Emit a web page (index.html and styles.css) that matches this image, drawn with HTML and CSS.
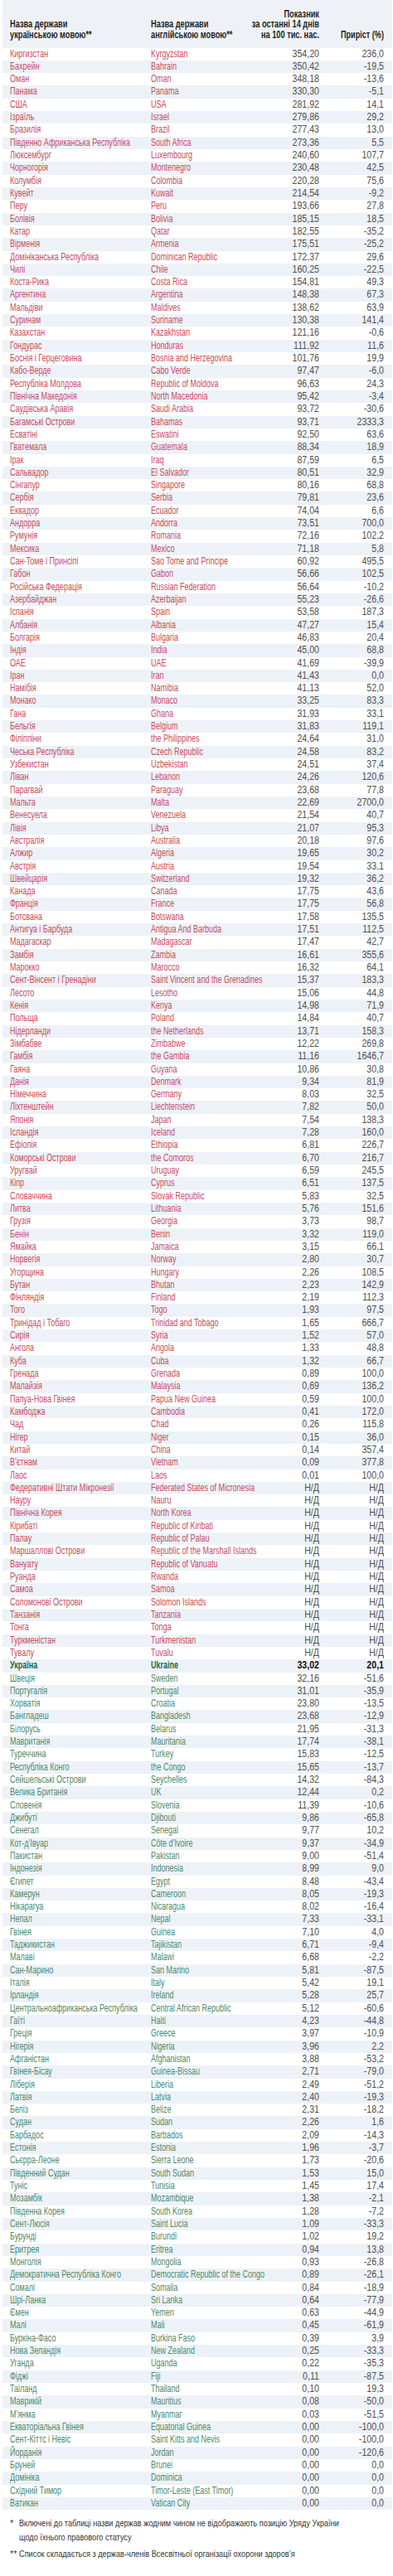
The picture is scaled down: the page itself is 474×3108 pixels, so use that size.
FILE: index.html
```html
<!DOCTYPE html>
<html lang="uk">
<head>
<meta charset="utf-8">
<title>Показник захворюваності за 14 днів</title>
<link rel="stylesheet" href="styles.css">
</head>
<body>
<div class="page">
  <div class="tbl">
    <div class="head">
      <div class="c1">Назва держави<br>українською мовою**</div>
      <div class="c2">Назва держави<br>англійською мовою**</div>
      <div class="c3">Показник<br>за останні 14 днів<br>на 100 тис. нас.</div>
      <div class="c4">Приріст (%)</div>
    </div>
    <div class="rows">
      <div class="r red"><span class="c1">Киргизстан</span><span class="c2">Kyrgyzstan</span><span class="c3">354,20</span><span class="c4">236,0</span></div>
      <div class="r red"><span class="c1">Бахрейн</span><span class="c2">Bahrain</span><span class="c3">350,42</span><span class="c4">-19,5</span></div>
      <div class="r red"><span class="c1">Оман</span><span class="c2">Oman</span><span class="c3">348,18</span><span class="c4">-13,6</span></div>
      <div class="r red"><span class="c1">Панама</span><span class="c2">Panama</span><span class="c3">330,30</span><span class="c4">-5,1</span></div>
      <div class="r red"><span class="c1">США</span><span class="c2">USA</span><span class="c3">281,92</span><span class="c4">14,1</span></div>
      <div class="r red"><span class="c1">Ізраїль</span><span class="c2">Israel</span><span class="c3">279,86</span><span class="c4">29,2</span></div>
      <div class="r red"><span class="c1">Бразилія</span><span class="c2">Brazil</span><span class="c3">277,43</span><span class="c4">13,0</span></div>
      <div class="r red"><span class="c1">Південно Африканська Республіка</span><span class="c2">South Africa</span><span class="c3">273,36</span><span class="c4">5,5</span></div>
      <div class="r red"><span class="c1">Люксембург</span><span class="c2">Luxembourg</span><span class="c3">240,60</span><span class="c4">107,7</span></div>
      <div class="r red"><span class="c1">Чорногорія</span><span class="c2">Montenegro</span><span class="c3">230,48</span><span class="c4">42,5</span></div>
      <div class="r red"><span class="c1">Колумбія</span><span class="c2">Colombia</span><span class="c3">220,28</span><span class="c4">75,6</span></div>
      <div class="r red"><span class="c1">Кувейт</span><span class="c2">Kuwait</span><span class="c3">214,54</span><span class="c4">-9,2</span></div>
      <div class="r red"><span class="c1">Перу</span><span class="c2">Peru</span><span class="c3">193,66</span><span class="c4">27,8</span></div>
      <div class="r red"><span class="c1">Болівія</span><span class="c2">Bolivia</span><span class="c3">185,15</span><span class="c4">18,5</span></div>
      <div class="r red"><span class="c1">Катар</span><span class="c2">Qatar</span><span class="c3">182,55</span><span class="c4">-35,2</span></div>
      <div class="r red"><span class="c1">Вірменія</span><span class="c2">Armenia</span><span class="c3">175,51</span><span class="c4">-25,2</span></div>
      <div class="r red"><span class="c1">Домініканська Республіка</span><span class="c2">Dominican Republic</span><span class="c3">172,37</span><span class="c4">29,6</span></div>
      <div class="r red"><span class="c1">Чилі</span><span class="c2">Chile</span><span class="c3">160,25</span><span class="c4">-22,5</span></div>
      <div class="r red"><span class="c1">Коста-Рика</span><span class="c2">Costa Rica</span><span class="c3">154,81</span><span class="c4">49,3</span></div>
      <div class="r red"><span class="c1">Аргентина</span><span class="c2">Argentina</span><span class="c3">148,38</span><span class="c4">67,3</span></div>
      <div class="r red"><span class="c1">Мальдіви</span><span class="c2">Maldives</span><span class="c3">138,62</span><span class="c4">63,9</span></div>
      <div class="r red"><span class="c1">Суринам</span><span class="c2">Suriname</span><span class="c3">130,38</span><span class="c4">141,4</span></div>
      <div class="r red"><span class="c1">Казахстан</span><span class="c2">Kazakhstan</span><span class="c3">121,16</span><span class="c4">-0,6</span></div>
      <div class="r red"><span class="c1">Гондурас</span><span class="c2">Honduras</span><span class="c3">111,92</span><span class="c4">11,6</span></div>
      <div class="r red"><span class="c1">Боснія і Герцеговина</span><span class="c2">Bosnia and Herzegovina</span><span class="c3">101,76</span><span class="c4">19,9</span></div>
      <div class="r red"><span class="c1">Кабо-Верде</span><span class="c2">Cabo Verde</span><span class="c3">97,47</span><span class="c4">-6,0</span></div>
      <div class="r red"><span class="c1">Республіка Молдова</span><span class="c2">Republic of Moldova</span><span class="c3">96,63</span><span class="c4">24,3</span></div>
      <div class="r red"><span class="c1">Північна Македонія</span><span class="c2">North Macedonia</span><span class="c3">95,42</span><span class="c4">-3,4</span></div>
      <div class="r red"><span class="c1">Саудівська Аравія</span><span class="c2">Saudi Arabia</span><span class="c3">93,72</span><span class="c4">-30,6</span></div>
      <div class="r red"><span class="c1">Багамські Острови</span><span class="c2">Bahamas</span><span class="c3">93,71</span><span class="c4">2333,3</span></div>
      <div class="r red"><span class="c1">Есватіні</span><span class="c2">Eswatini</span><span class="c3">92,50</span><span class="c4">63,6</span></div>
      <div class="r red"><span class="c1">Гватемала</span><span class="c2">Guatemala</span><span class="c3">88,34</span><span class="c4">18,9</span></div>
      <div class="r red"><span class="c1">Ірак</span><span class="c2">Iraq</span><span class="c3">87,59</span><span class="c4">6,5</span></div>
      <div class="r red"><span class="c1">Сальвадор</span><span class="c2">El Salvador</span><span class="c3">80,51</span><span class="c4">32,9</span></div>
      <div class="r red"><span class="c1">Сінгапур</span><span class="c2">Singapore</span><span class="c3">80,16</span><span class="c4">68,8</span></div>
      <div class="r red"><span class="c1">Сербія</span><span class="c2">Serbia</span><span class="c3">79,81</span><span class="c4">23,6</span></div>
      <div class="r red"><span class="c1">Еквадор</span><span class="c2">Ecuador</span><span class="c3">74,04</span><span class="c4">6,6</span></div>
      <div class="r red"><span class="c1">Андорра</span><span class="c2">Andorra</span><span class="c3">73,51</span><span class="c4">700,0</span></div>
      <div class="r red"><span class="c1">Румунія</span><span class="c2">Romania</span><span class="c3">72,16</span><span class="c4">102,2</span></div>
      <div class="r red"><span class="c1">Мексика</span><span class="c2">Mexico</span><span class="c3">71,18</span><span class="c4">5,8</span></div>
      <div class="r red"><span class="c1">Сан-Томе і Принсіпі</span><span class="c2">Sao Tome and Principe</span><span class="c3">60,92</span><span class="c4">495,5</span></div>
      <div class="r red"><span class="c1">Габон</span><span class="c2">Gabon</span><span class="c3">56,66</span><span class="c4">102,5</span></div>
      <div class="r red"><span class="c1">Російська Федерація</span><span class="c2">Russian Federation</span><span class="c3">56,64</span><span class="c4">-10,2</span></div>
      <div class="r red"><span class="c1">Азербайджан</span><span class="c2">Azerbaijan</span><span class="c3">55,23</span><span class="c4">-26,6</span></div>
      <div class="r red"><span class="c1">Іспанія</span><span class="c2">Spain</span><span class="c3">53,58</span><span class="c4">187,3</span></div>
      <div class="r red"><span class="c1">Албанія</span><span class="c2">Albania</span><span class="c3">47,27</span><span class="c4">15,4</span></div>
      <div class="r red"><span class="c1">Болгарія</span><span class="c2">Bulgaria</span><span class="c3">46,83</span><span class="c4">20,4</span></div>
      <div class="r red"><span class="c1">Індія</span><span class="c2">India</span><span class="c3">45,00</span><span class="c4">68,8</span></div>
      <div class="r red"><span class="c1">ОАЕ</span><span class="c2">UAE</span><span class="c3">41,69</span><span class="c4">-39,9</span></div>
      <div class="r red"><span class="c1">Іран</span><span class="c2">Iran</span><span class="c3">41,43</span><span class="c4">0,0</span></div>
      <div class="r red"><span class="c1">Намібія</span><span class="c2">Namibia</span><span class="c3">41,13</span><span class="c4">52,0</span></div>
      <div class="r red"><span class="c1">Монако</span><span class="c2">Monaco</span><span class="c3">33,25</span><span class="c4">83,3</span></div>
      <div class="r red"><span class="c1">Гана</span><span class="c2">Ghana</span><span class="c3">31,93</span><span class="c4">33,1</span></div>
      <div class="r red"><span class="c1">Бельгія</span><span class="c2">Belgium</span><span class="c3">31,83</span><span class="c4">119,1</span></div>
      <div class="r red"><span class="c1">Філіппіни</span><span class="c2">the Philippines</span><span class="c3">24,64</span><span class="c4">31,0</span></div>
      <div class="r red"><span class="c1">Чеська Республіка</span><span class="c2">Czech Republic</span><span class="c3">24,58</span><span class="c4">83,2</span></div>
      <div class="r red"><span class="c1">Узбекистан</span><span class="c2">Uzbekistan</span><span class="c3">24,51</span><span class="c4">37,4</span></div>
      <div class="r red"><span class="c1">Ліван</span><span class="c2">Lebanon</span><span class="c3">24,26</span><span class="c4">120,6</span></div>
      <div class="r red"><span class="c1">Парагвай</span><span class="c2">Paraguay</span><span class="c3">23,68</span><span class="c4">77,8</span></div>
      <div class="r red"><span class="c1">Мальта</span><span class="c2">Malta</span><span class="c3">22,69</span><span class="c4">2700,0</span></div>
      <div class="r red"><span class="c1">Венесуела</span><span class="c2">Venezuela</span><span class="c3">21,54</span><span class="c4">40,7</span></div>
      <div class="r red"><span class="c1">Лівія</span><span class="c2">Libya</span><span class="c3">21,07</span><span class="c4">95,3</span></div>
      <div class="r red"><span class="c1">Австралія</span><span class="c2">Australia</span><span class="c3">20,18</span><span class="c4">97,6</span></div>
      <div class="r red"><span class="c1">Алжир</span><span class="c2">Algeria</span><span class="c3">19,65</span><span class="c4">30,2</span></div>
      <div class="r red"><span class="c1">Австрія</span><span class="c2">Austria</span><span class="c3">19,54</span><span class="c4">33,1</span></div>
      <div class="r red"><span class="c1">Швейцарія</span><span class="c2">Switzerland</span><span class="c3">19,32</span><span class="c4">36,2</span></div>
      <div class="r red"><span class="c1">Канада</span><span class="c2">Canada</span><span class="c3">17,75</span><span class="c4">43,6</span></div>
      <div class="r red"><span class="c1">Франція</span><span class="c2">France</span><span class="c3">17,75</span><span class="c4">56,8</span></div>
      <div class="r red"><span class="c1">Ботсвана</span><span class="c2">Botswana</span><span class="c3">17,58</span><span class="c4">135,5</span></div>
      <div class="r red"><span class="c1">Антигуа і Барбуда</span><span class="c2">Antigua And Barbuda</span><span class="c3">17,51</span><span class="c4">112,5</span></div>
      <div class="r red"><span class="c1">Мадагаскар</span><span class="c2">Madagascar</span><span class="c3">17,47</span><span class="c4">42,7</span></div>
      <div class="r red"><span class="c1">Замбія</span><span class="c2">Zambia</span><span class="c3">16,61</span><span class="c4">355,6</span></div>
      <div class="r red"><span class="c1">Марокко</span><span class="c2">Marocco</span><span class="c3">16,32</span><span class="c4">64,1</span></div>
      <div class="r red"><span class="c1">Сент-Вінсент і Гренадіни</span><span class="c2">Saint Vincent and the Grenadines</span><span class="c3">15,37</span><span class="c4">183,3</span></div>
      <div class="r red"><span class="c1">Лесото</span><span class="c2">Lesotho</span><span class="c3">15,06</span><span class="c4">44,8</span></div>
      <div class="r red"><span class="c1">Кенія</span><span class="c2">Kenya</span><span class="c3">14,98</span><span class="c4">71,9</span></div>
      <div class="r red"><span class="c1">Польща</span><span class="c2">Poland</span><span class="c3">14,84</span><span class="c4">40,7</span></div>
      <div class="r red"><span class="c1">Нідерланди</span><span class="c2">the Netherlands</span><span class="c3">13,71</span><span class="c4">158,3</span></div>
      <div class="r red"><span class="c1">Зімбабве</span><span class="c2">Zimbabwe</span><span class="c3">12,22</span><span class="c4">269,8</span></div>
      <div class="r red"><span class="c1">Гамбія</span><span class="c2">the Gambia</span><span class="c3">11,16</span><span class="c4">1646,7</span></div>
      <div class="r red"><span class="c1">Гаяна</span><span class="c2">Guyana</span><span class="c3">10,86</span><span class="c4">30,8</span></div>
      <div class="r red"><span class="c1">Данія</span><span class="c2">Denmark</span><span class="c3">9,34</span><span class="c4">81,9</span></div>
      <div class="r red"><span class="c1">Німеччина</span><span class="c2">Germany</span><span class="c3">8,03</span><span class="c4">32,5</span></div>
      <div class="r red"><span class="c1">Ліхтенштейн</span><span class="c2">Liechtenstein</span><span class="c3">7,82</span><span class="c4">50,0</span></div>
      <div class="r red"><span class="c1">Японія</span><span class="c2">Japan</span><span class="c3">7,54</span><span class="c4">138,3</span></div>
      <div class="r red"><span class="c1">Ісландія</span><span class="c2">Iceland</span><span class="c3">7,28</span><span class="c4">160,0</span></div>
      <div class="r red"><span class="c1">Ефіопія</span><span class="c2">Ethiopia</span><span class="c3">6,81</span><span class="c4">226,7</span></div>
      <div class="r red"><span class="c1">Коморські Острови</span><span class="c2">the Comoros</span><span class="c3">6,70</span><span class="c4">216,7</span></div>
      <div class="r red"><span class="c1">Уругвай</span><span class="c2">Uruguay</span><span class="c3">6,59</span><span class="c4">245,5</span></div>
      <div class="r red"><span class="c1">Кіпр</span><span class="c2">Cyprus</span><span class="c3">6,51</span><span class="c4">137,5</span></div>
      <div class="r red"><span class="c1">Словаччина</span><span class="c2">Slovak Republic</span><span class="c3">5,83</span><span class="c4">32,5</span></div>
      <div class="r red"><span class="c1">Литва</span><span class="c2">Lithuania</span><span class="c3">5,76</span><span class="c4">151,6</span></div>
      <div class="r red"><span class="c1">Грузія</span><span class="c2">Georgia</span><span class="c3">3,73</span><span class="c4">98,7</span></div>
      <div class="r red"><span class="c1">Бенін</span><span class="c2">Benin</span><span class="c3">3,32</span><span class="c4">119,0</span></div>
      <div class="r red"><span class="c1">Ямайка</span><span class="c2">Jamaica</span><span class="c3">3,15</span><span class="c4">66,1</span></div>
      <div class="r red"><span class="c1">Норвегія</span><span class="c2">Norway</span><span class="c3">2,80</span><span class="c4">30,7</span></div>
      <div class="r red"><span class="c1">Угорщина</span><span class="c2">Hungary</span><span class="c3">2,26</span><span class="c4">108,5</span></div>
      <div class="r red"><span class="c1">Бутан</span><span class="c2">Bhutan</span><span class="c3">2,23</span><span class="c4">142,9</span></div>
      <div class="r red"><span class="c1">Фінляндія</span><span class="c2">Finland</span><span class="c3">2,19</span><span class="c4">112,3</span></div>
      <div class="r red"><span class="c1">Того</span><span class="c2">Togo</span><span class="c3">1,93</span><span class="c4">97,5</span></div>
      <div class="r red"><span class="c1">Тринідад і Тобаго</span><span class="c2">Trinidad and Tobago</span><span class="c3">1,65</span><span class="c4">666,7</span></div>
      <div class="r red"><span class="c1">Сирія</span><span class="c2">Syria</span><span class="c3">1,52</span><span class="c4">57,0</span></div>
      <div class="r red"><span class="c1">Ангола</span><span class="c2">Angola</span><span class="c3">1,33</span><span class="c4">48,8</span></div>
      <div class="r red"><span class="c1">Куба</span><span class="c2">Cuba</span><span class="c3">1,32</span><span class="c4">66,7</span></div>
      <div class="r red"><span class="c1">Гренада</span><span class="c2">Grenada</span><span class="c3">0,89</span><span class="c4">100,0</span></div>
      <div class="r red"><span class="c1">Малайзія</span><span class="c2">Malaysia</span><span class="c3">0,69</span><span class="c4">136,2</span></div>
      <div class="r red"><span class="c1">Папуа-Нова Гвінея</span><span class="c2">Papua New Guinea</span><span class="c3">0,59</span><span class="c4">100,0</span></div>
      <div class="r red"><span class="c1">Камбоджа</span><span class="c2">Cambodia</span><span class="c3">0,41</span><span class="c4">172,0</span></div>
      <div class="r red"><span class="c1">Чад</span><span class="c2">Chad</span><span class="c3">0,26</span><span class="c4">115,8</span></div>
      <div class="r red"><span class="c1">Нігер</span><span class="c2">Niger</span><span class="c3">0,15</span><span class="c4">36,0</span></div>
      <div class="r red"><span class="c1">Китай</span><span class="c2">China</span><span class="c3">0,14</span><span class="c4">357,4</span></div>
      <div class="r red"><span class="c1">В’єтнам</span><span class="c2">Vietnam</span><span class="c3">0,09</span><span class="c4">377,8</span></div>
      <div class="r red"><span class="c1">Лаос</span><span class="c2">Laos</span><span class="c3">0,01</span><span class="c4">100,0</span></div>
      <div class="r red"><span class="c1">Федеративні Штати Мікронезії</span><span class="c2">Federated States of Micronesia</span><span class="c3">Н/Д</span><span class="c4">Н/Д</span></div>
      <div class="r red"><span class="c1">Науру</span><span class="c2">Nauru</span><span class="c3">Н/Д</span><span class="c4">Н/Д</span></div>
      <div class="r red"><span class="c1">Північна Корея</span><span class="c2">North Korea</span><span class="c3">Н/Д</span><span class="c4">Н/Д</span></div>
      <div class="r red"><span class="c1">Кірибаті</span><span class="c2">Republic of Kiribati</span><span class="c3">Н/Д</span><span class="c4">Н/Д</span></div>
      <div class="r red"><span class="c1">Палау</span><span class="c2">Republic of Palau</span><span class="c3">Н/Д</span><span class="c4">Н/Д</span></div>
      <div class="r red"><span class="c1">Маршаллові Острови</span><span class="c2">Republic of the Marshall Islands</span><span class="c3">Н/Д</span><span class="c4">Н/Д</span></div>
      <div class="r red"><span class="c1">Вануату</span><span class="c2">Republic of Vanuatu</span><span class="c3">Н/Д</span><span class="c4">Н/Д</span></div>
      <div class="r red"><span class="c1">Руанда</span><span class="c2">Rwanda</span><span class="c3">Н/Д</span><span class="c4">Н/Д</span></div>
      <div class="r red"><span class="c1">Самоа</span><span class="c2">Samoa</span><span class="c3">Н/Д</span><span class="c4">Н/Д</span></div>
      <div class="r red"><span class="c1">Соломонові Острови</span><span class="c2">Solomon Islands</span><span class="c3">Н/Д</span><span class="c4">Н/Д</span></div>
      <div class="r red"><span class="c1">Танзанія</span><span class="c2">Tanzania</span><span class="c3">Н/Д</span><span class="c4">Н/Д</span></div>
      <div class="r red"><span class="c1">Тонга</span><span class="c2">Tonga</span><span class="c3">Н/Д</span><span class="c4">Н/Д</span></div>
      <div class="r red"><span class="c1">Туркменістан</span><span class="c2">Turkmenistan</span><span class="c3">Н/Д</span><span class="c4">Н/Д</span></div>
      <div class="r red"><span class="c1">Тувалу</span><span class="c2">Tuvalu</span><span class="c3">Н/Д</span><span class="c4">Н/Д</span></div>
      <div class="r ua"><span class="c1">Україна</span><span class="c2">Ukraine</span><span class="c3">33,02</span><span class="c4">20,1</span></div>
      <div class="r green"><span class="c1">Швеція</span><span class="c2">Sweden</span><span class="c3">32,16</span><span class="c4">-51,6</span></div>
      <div class="r green"><span class="c1">Португалія</span><span class="c2">Portugal</span><span class="c3">31,01</span><span class="c4">-35,9</span></div>
      <div class="r green"><span class="c1">Хорватія</span><span class="c2">Croatia</span><span class="c3">23,80</span><span class="c4">-13,5</span></div>
      <div class="r green"><span class="c1">Бангладеш</span><span class="c2">Bangladesh</span><span class="c3">23,68</span><span class="c4">-12,9</span></div>
      <div class="r green"><span class="c1">Білорусь</span><span class="c2">Belarus</span><span class="c3">21,95</span><span class="c4">-31,3</span></div>
      <div class="r green"><span class="c1">Мавританія</span><span class="c2">Mauritania</span><span class="c3">17,74</span><span class="c4">-38,1</span></div>
      <div class="r green"><span class="c1">Туреччина</span><span class="c2">Turkey</span><span class="c3">15,83</span><span class="c4">-12,5</span></div>
      <div class="r green"><span class="c1">Республіка Конго</span><span class="c2">the Congo</span><span class="c3">15,65</span><span class="c4">-13,7</span></div>
      <div class="r green"><span class="c1">Сейшельські Острови</span><span class="c2">Seychelles</span><span class="c3">14,32</span><span class="c4">-84,3</span></div>
      <div class="r green"><span class="c1">Велика Британія</span><span class="c2">UK</span><span class="c3">12,44</span><span class="c4">0,2</span></div>
      <div class="r green"><span class="c1">Словенія</span><span class="c2">Slovenia</span><span class="c3">11,39</span><span class="c4">-10,6</span></div>
      <div class="r green"><span class="c1">Джибуті</span><span class="c2">Djibouti</span><span class="c3">9,86</span><span class="c4">-65,8</span></div>
      <div class="r green"><span class="c1">Сенегал</span><span class="c2">Senegal</span><span class="c3">9,77</span><span class="c4">10,2</span></div>
      <div class="r green"><span class="c1">Кот-д’Івуар</span><span class="c2">Côte d’Ivoire</span><span class="c3">9,37</span><span class="c4">-34,9</span></div>
      <div class="r green"><span class="c1">Пакистан</span><span class="c2">Pakistan</span><span class="c3">9,00</span><span class="c4">-51,4</span></div>
      <div class="r green"><span class="c1">Індонезія</span><span class="c2">Indonesia</span><span class="c3">8,99</span><span class="c4">9,0</span></div>
      <div class="r green"><span class="c1">Єгипет</span><span class="c2">Egypt</span><span class="c3">8,48</span><span class="c4">-43,4</span></div>
      <div class="r green"><span class="c1">Камерун</span><span class="c2">Cameroon</span><span class="c3">8,05</span><span class="c4">-19,3</span></div>
      <div class="r green"><span class="c1">Нікарагуа</span><span class="c2">Nicaragua</span><span class="c3">8,02</span><span class="c4">-16,4</span></div>
      <div class="r green"><span class="c1">Непал</span><span class="c2">Nepal</span><span class="c3">7,33</span><span class="c4">-33,1</span></div>
      <div class="r green"><span class="c1">Гвінея</span><span class="c2">Guinea</span><span class="c3">7,10</span><span class="c4">4,0</span></div>
      <div class="r green"><span class="c1">Таджикистан</span><span class="c2">Tajikistan</span><span class="c3">6,71</span><span class="c4">-9,4</span></div>
      <div class="r green"><span class="c1">Малаві</span><span class="c2">Malawi</span><span class="c3">6,68</span><span class="c4">-2,2</span></div>
      <div class="r green"><span class="c1">Сан-Марино</span><span class="c2">San Marino</span><span class="c3">5,81</span><span class="c4">-87,5</span></div>
      <div class="r green"><span class="c1">Італія</span><span class="c2">Italy</span><span class="c3">5,42</span><span class="c4">19,1</span></div>
      <div class="r green"><span class="c1">Ірландія</span><span class="c2">Ireland</span><span class="c3">5,28</span><span class="c4">25,7</span></div>
      <div class="r green"><span class="c1">Центральноафриканська Республіка</span><span class="c2">Central African Republic</span><span class="c3">5,12</span><span class="c4">-60,6</span></div>
      <div class="r green"><span class="c1">Гаїті</span><span class="c2">Haiti</span><span class="c3">4,23</span><span class="c4">-44,8</span></div>
      <div class="r green"><span class="c1">Греція</span><span class="c2">Greece</span><span class="c3">3,97</span><span class="c4">-10,9</span></div>
      <div class="r green"><span class="c1">Нігерія</span><span class="c2">Nigeria</span><span class="c3">3,96</span><span class="c4">2,2</span></div>
      <div class="r green"><span class="c1">Афганістан</span><span class="c2">Afghanistan</span><span class="c3">3,88</span><span class="c4">-53,2</span></div>
      <div class="r green"><span class="c1">Гвінея-Бісау</span><span class="c2">Guinea-Bissau</span><span class="c3">2,71</span><span class="c4">-79,0</span></div>
      <div class="r green"><span class="c1">Ліберія</span><span class="c2">Liberia</span><span class="c3">2,49</span><span class="c4">-51,2</span></div>
      <div class="r green"><span class="c1">Латвія</span><span class="c2">Latvia</span><span class="c3">2,40</span><span class="c4">-19,3</span></div>
      <div class="r green"><span class="c1">Беліз</span><span class="c2">Belize</span><span class="c3">2,31</span><span class="c4">-18,2</span></div>
      <div class="r green"><span class="c1">Судан</span><span class="c2">Sudan</span><span class="c3">2,26</span><span class="c4">1,6</span></div>
      <div class="r green"><span class="c1">Барбадос</span><span class="c2">Barbados</span><span class="c3">2,09</span><span class="c4">-14,3</span></div>
      <div class="r green"><span class="c1">Естонія</span><span class="c2">Estonia</span><span class="c3">1,96</span><span class="c4">-3,7</span></div>
      <div class="r green"><span class="c1">Сьєрра-Леоне</span><span class="c2">Sierra Leone</span><span class="c3">1,73</span><span class="c4">-20,6</span></div>
      <div class="r green"><span class="c1">Південний Судан</span><span class="c2">South Sudan</span><span class="c3">1,53</span><span class="c4">15,0</span></div>
      <div class="r green"><span class="c1">Туніс</span><span class="c2">Tunisia</span><span class="c3">1,45</span><span class="c4">17,4</span></div>
      <div class="r green"><span class="c1">Мозамбік</span><span class="c2">Mozambique</span><span class="c3">1,38</span><span class="c4">-2,1</span></div>
      <div class="r green"><span class="c1">Південна Корея</span><span class="c2">South Korea</span><span class="c3">1,28</span><span class="c4">-7,2</span></div>
      <div class="r green"><span class="c1">Сент-Люсія</span><span class="c2">Saint Lucia</span><span class="c3">1,09</span><span class="c4">-33,3</span></div>
      <div class="r green"><span class="c1">Бурунді</span><span class="c2">Burundi</span><span class="c3">1,02</span><span class="c4">19,2</span></div>
      <div class="r green"><span class="c1">Еритрея</span><span class="c2">Eritrea</span><span class="c3">0,94</span><span class="c4">13,8</span></div>
      <div class="r green"><span class="c1">Монголія</span><span class="c2">Mongolia</span><span class="c3">0,93</span><span class="c4">-26,8</span></div>
      <div class="r green"><span class="c1">Демократична Республіка Конго</span><span class="c2">Democratic Republic of the Congo</span><span class="c3">0,89</span><span class="c4">-26,1</span></div>
      <div class="r green"><span class="c1">Сомалі</span><span class="c2">Somalia</span><span class="c3">0,84</span><span class="c4">-18,9</span></div>
      <div class="r green"><span class="c1">Шрі-Ланка</span><span class="c2">Sri Lanka</span><span class="c3">0,64</span><span class="c4">-77,9</span></div>
      <div class="r green"><span class="c1">Ємен</span><span class="c2">Yemen</span><span class="c3">0,63</span><span class="c4">-44,9</span></div>
      <div class="r green"><span class="c1">Малі</span><span class="c2">Mali</span><span class="c3">0,45</span><span class="c4">-61,9</span></div>
      <div class="r green"><span class="c1">Буркіна-Фасо</span><span class="c2">Burkina Faso</span><span class="c3">0,39</span><span class="c4">3,9</span></div>
      <div class="r green"><span class="c1">Нова Зеландія</span><span class="c2">New Zealand</span><span class="c3">0,25</span><span class="c4">-33,3</span></div>
      <div class="r green"><span class="c1">Уганда</span><span class="c2">Uganda</span><span class="c3">0,22</span><span class="c4">-35,3</span></div>
      <div class="r green"><span class="c1">Фіджі</span><span class="c2">Fiji</span><span class="c3">0,11</span><span class="c4">-87,5</span></div>
      <div class="r green"><span class="c1">Таіланд</span><span class="c2">Thailand</span><span class="c3">0,10</span><span class="c4">19,3</span></div>
      <div class="r green"><span class="c1">Маврикій</span><span class="c2">Mauritius</span><span class="c3">0,08</span><span class="c4">-50,0</span></div>
      <div class="r green"><span class="c1">М’янма</span><span class="c2">Myanmar</span><span class="c3">0,03</span><span class="c4">-51,5</span></div>
      <div class="r green"><span class="c1">Екваторіальна Гвінея</span><span class="c2">Equatorial Guinea</span><span class="c3">0,00</span><span class="c4">-100,0</span></div>
      <div class="r green"><span class="c1">Сент-Кіттс і Невіс</span><span class="c2">Saint Kitts and Nevis</span><span class="c3">0,00</span><span class="c4">-100,0</span></div>
      <div class="r green"><span class="c1">Йорданія</span><span class="c2">Jordan</span><span class="c3">0,00</span><span class="c4">-120,6</span></div>
      <div class="r green"><span class="c1">Бруней</span><span class="c2">Brunei</span><span class="c3">0,00</span><span class="c4">0,0</span></div>
      <div class="r green"><span class="c1">Домініка</span><span class="c2">Dominica</span><span class="c3">0,00</span><span class="c4">0,0</span></div>
      <div class="r green"><span class="c1">Східний Тимор</span><span class="c2">Timor-Leste (East Timor)</span><span class="c3">0,00</span><span class="c4">0,0</span></div>
      <div class="r green"><span class="c1">Ватикан</span><span class="c2">Vatican City</span><span class="c3">0,00</span><span class="c4">0,0</span></div>
    </div>
  </div>
  <div class="notes">
    <div class="note"><span class="mark">*</span><span class="txt">Включені до таблиці назви держав жодним чином не відображають позицію Уряду України щодо їхнього правового статусу</span></div>
    <div class="note"><span class="mark">**</span><span class="txt">Список складається з держав-членів Всесвітньої організації охорони здоров’я</span></div>
  </div>
</div>
</body>
</html>
```
FILE: styles.css
```css
html, body {
  margin: 0;
  padding: 0;
  background: #ffffff;
}

body {
  font-family: "Liberation Sans", Arial, sans-serif;
  color: #222;
}

.page {
  width: 474px;
}

.tbl {
  margin: 0 1px 0 3px;
}

.head,
.r {
  display: grid;
  grid-template-columns: 179px 108px 95px 88px;
}

/* header */
.head {
  height: 57.5px;
  box-sizing: border-box;
  padding-bottom: 8.6px;
  align-items: end;
  background: #eef2f7;
  font-weight: bold;
  font-size: 13px;
  line-height: 12.8px;
  color: #1f1f1f;
  white-space: nowrap;
}

.head .c1 {
  transform: scaleX(0.71);
  transform-origin: 9px 50%;
}

.head .c2 {
  transform: scaleX(0.71);
  transform-origin: 0 50%;
}

.head .c3 {
  margin-left: -70px;
  transform: scaleX(0.71);
  transform-origin: 100% 50%;
}

.head .c4 {
  margin-left: -40px;
  transform: scaleX(0.70);
  transform-origin: calc(100% - 10px) 50%;
}

/* columns */
.c1 {
  padding-left: 9px;
}

.c3,
.c4 {
  text-align: right;
}

.c4 {
  padding-right: 10px;
}

/* body rows */
.r {
  height: 15.32px;
  line-height: 15.32px;
  font-size: 12.5px;
  white-space: nowrap;
  color: #4f4f4f;
}

.r .c1 {
  transform: scaleX(0.72);
  transform-origin: 9px 50%;
}

.r .c2 {
  transform: scaleX(0.72);
  transform-origin: 0 50%;
}

.r .c3 {
  transform: scaleX(0.85);
  transform-origin: 100% 50%;
}

.r .c4 {
  transform: scaleX(0.85);
  transform-origin: calc(100% - 10px) 50%;
}

.rows .r:nth-child(even) {
  background: #edf2f8;
}

.red .c1,
.red .c2 {
  color: #c84b5d;
}

.green .c1,
.green .c2 {
  color: #4c8a6a;
}

.ua {
  font-weight: bold;
  color: #111;
}

.ua .c1,
.ua .c2 {
  color: #1b6a45;
}

/* footnotes */
.notes {
  padding: 8px 0 0 12px;
  font-size: 10.8px;
  line-height: 17px;
  color: #333;
}

.note {
  display: flex;
  margin-bottom: 3px;
}

.mark {
  width: 11px;
  flex: none;
}

.txt {
  width: 470px;
  flex: none;
  transform: scaleX(0.85);
  transform-origin: 0 50%;
}
```
